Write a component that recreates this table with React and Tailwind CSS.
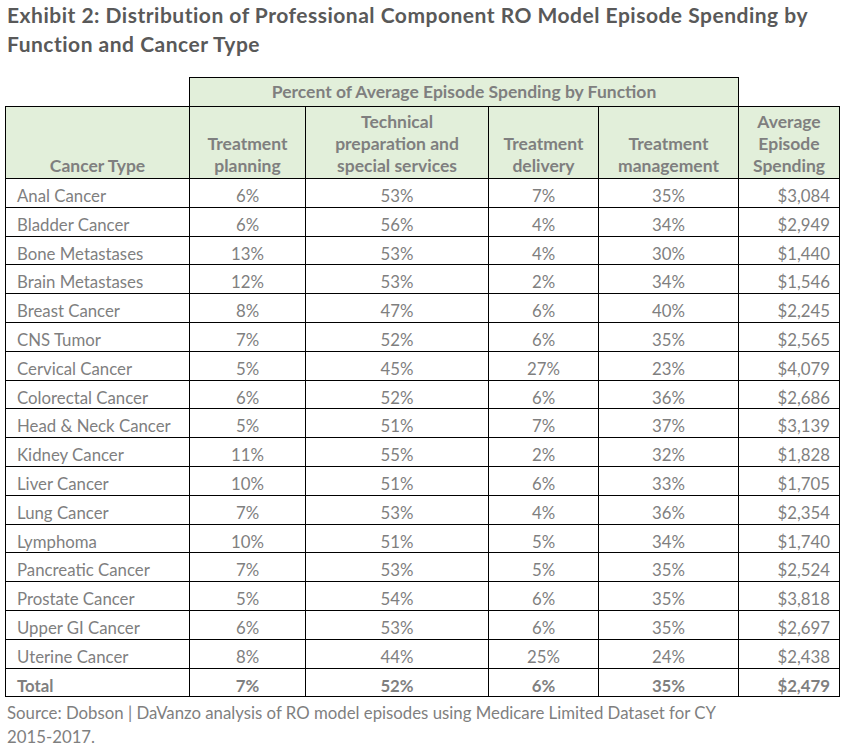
const rows = [
  ["Anal Cancer", "6%", "53%", "7%", "35%", "$3,084"],
  ["Bladder Cancer", "6%", "56%", "4%", "34%", "$2,949"],
  ["Bone Metastases", "13%", "53%", "4%", "30%", "$1,440"],
  ["Brain Metastases", "12%", "53%", "2%", "34%", "$1,546"],
  ["Breast Cancer", "8%", "47%", "6%", "40%", "$2,245"],
  ["CNS Tumor", "7%", "52%", "6%", "35%", "$2,565"],
  ["Cervical Cancer", "5%", "45%", "27%", "23%", "$4,079"],
  ["Colorectal Cancer", "6%", "52%", "6%", "36%", "$2,686"],
  ["Head & Neck Cancer", "5%", "51%", "7%", "37%", "$3,139"],
  ["Kidney Cancer", "11%", "55%", "2%", "32%", "$1,828"],
  ["Liver Cancer", "10%", "51%", "6%", "33%", "$1,705"],
  ["Lung Cancer", "7%", "53%", "4%", "36%", "$2,354"],
  ["Lymphoma", "10%", "51%", "5%", "34%", "$1,740"],
  ["Pancreatic Cancer", "7%", "53%", "5%", "35%", "$2,524"],
  ["Prostate Cancer", "5%", "54%", "6%", "35%", "$3,818"],
  ["Upper GI Cancer", "6%", "53%", "6%", "35%", "$2,697"],
  ["Uterine Cancer", "8%", "44%", "25%", "24%", "$2,438"],
];

const total = ["Total", "7%", "52%", "6%", "35%", "$2,479"];

// body cell: 7 + 19.8 + 1 + border -> ~28.8px row pitch
const cell = "border border-black pt-[7px] pb-px leading-[19.8px]";

function DataRow({ cells, bold }) {
  return (
    <tr className={bold ? "font-bold" : ""}>
      <td className={`${cell} pl-[11px] text-left`}>{cells[0]}</td>
      <td className={`${cell} text-center`}>{cells[1]}</td>
      <td className={`${cell} text-center`}>{cells[2]}</td>
      <td className={`${cell} text-center`}>{cells[3]}</td>
      <td className={`${cell} text-center`}>{cells[4]}</td>
      <td className={`${cell} pr-[9px] text-right`}>{cells[5]}</td>
    </tr>
  );
}

export default function App() {
  return (
    <div className="min-h-screen w-[865px] bg-white font-['Lato',sans-serif] text-[#7f7f7f]">
      <h1 className="whitespace-nowrap pl-[7px] text-[21px] font-bold leading-[29px] tracking-[0.5px] text-[#595959]">
        Exhibit 2: Distribution of Professional Component RO Model Episode Spending by
        <br />
        Function and Cancer Type
      </h1>

      <table className="ml-[5px] mt-[19px] table-fixed border-collapse text-[16.8px] leading-[22px]">
        <colgroup>
          <col className="w-[184px]" />
          <col className="w-[116px]" />
          <col className="w-[183px]" />
          <col className="w-[110px]" />
          <col className="w-[140px]" />
          <col className="w-[101px]" />
        </colgroup>
        <thead className="text-[17.5px]">
          <tr className="h-[29px]">
            <th></th>
            <th colSpan={4} className="border border-black bg-[#e2efda] text-center font-bold">
              Percent of Average Episode Spending by Function
            </th>
            <th></th>
          </tr>
          <tr className="h-[72px] align-bottom font-bold">
            <th className="border border-black bg-[#e2efda] pb-px text-center">Cancer Type</th>
            <th className="border border-black bg-[#e2efda] pb-px text-center">
              Treatment
              <br />
              planning
            </th>
            <th className="border border-black bg-[#e2efda] pb-px text-center">
              Technical
              <br />
              preparation and
              <br />
              special services
            </th>
            <th className="border border-black bg-[#e2efda] pb-px text-center">
              Treatment
              <br />
              delivery
            </th>
            <th className="border border-black bg-[#e2efda] pb-px text-center">
              Treatment
              <br />
              management
            </th>
            <th className="border border-black bg-[#e2efda] pb-px text-center">
              Average
              <br />
              Episode
              <br />
              Spending
            </th>
          </tr>
        </thead>
        <tbody>
          {rows.map((r) => (
            <DataRow key={r[0]} cells={r} />
          ))}
          <DataRow cells={total} bold />
        </tbody>
      </table>

      <p className="mt-[4px] whitespace-nowrap pl-[7px] text-[16.8px] leading-[24px]">
        Source: Dobson | DaVanzo analysis of RO model episodes using Medicare Limited Dataset for CY
        <br />
        2015-2017.
      </p>
    </div>
  );
}
